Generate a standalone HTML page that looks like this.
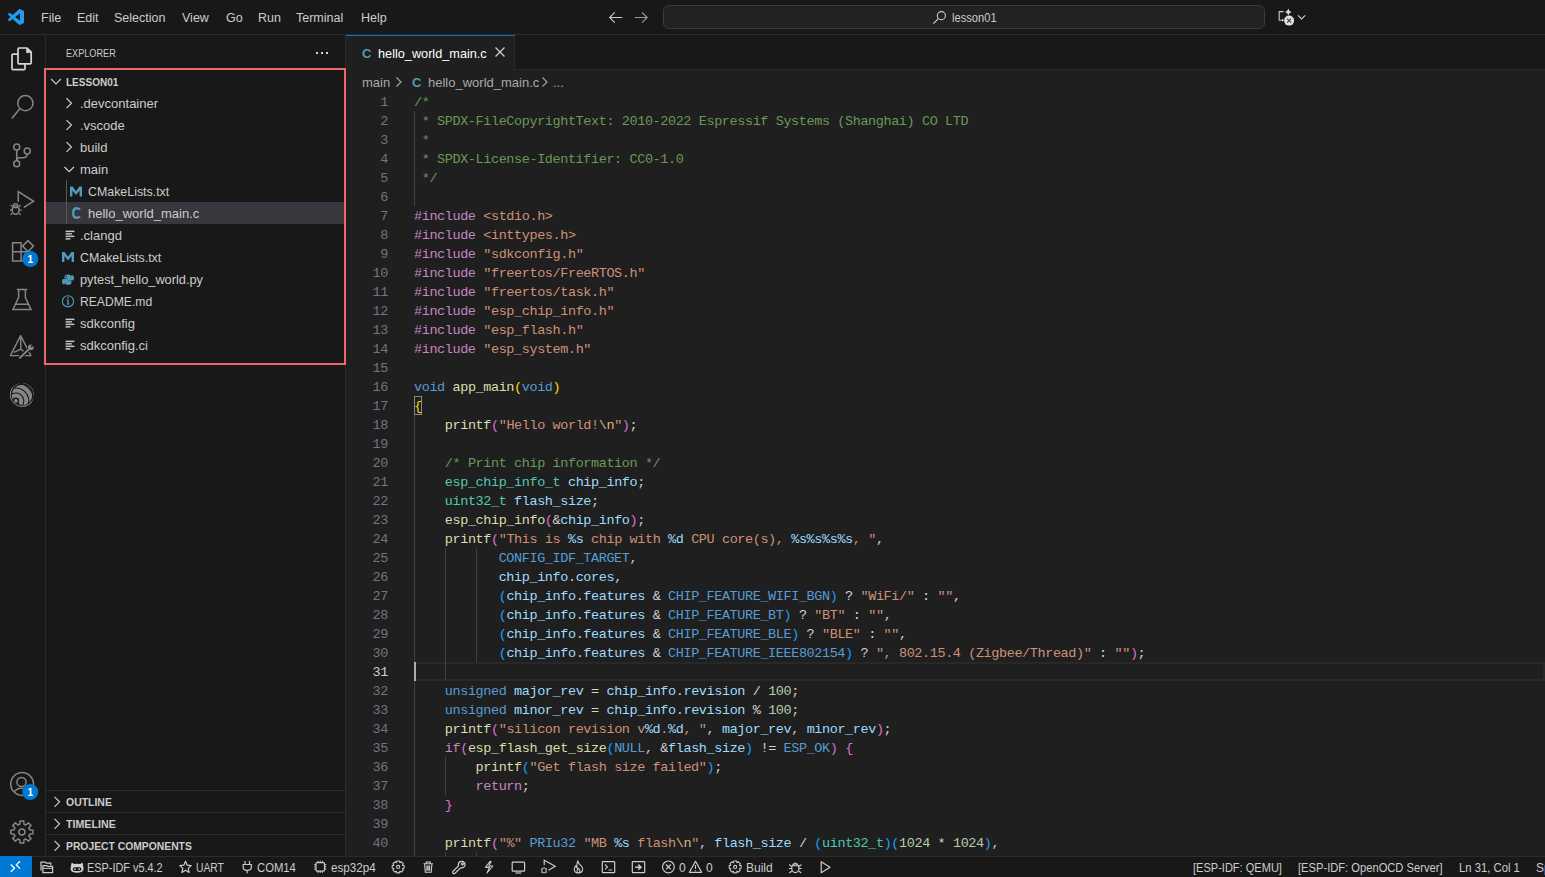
<!DOCTYPE html>
<html><head><meta charset="utf-8">
<style>
*{margin:0;padding:0;box-sizing:border-box}
html,body{width:1545px;height:877px;overflow:hidden;background:#181818;font-family:"Liberation Sans",sans-serif;color:#cccccc}
svg{position:absolute;overflow:visible}
.t{position:absolute;white-space:nowrap}
#title{position:absolute;left:0;top:0;width:1545px;height:35px;background:#181818;border-bottom:1px solid #2b2b2b}
.menu{position:absolute;top:11px;font-size:12.5px;color:#cccccc;white-space:nowrap}
#act{position:absolute;left:0;top:35px;width:46px;height:821px;background:#181818;border-right:1px solid #2b2b2b}
#side{position:absolute;left:46px;top:35px;width:300px;height:821px;background:#181818;border-right:1px solid #2b2b2b}
#editor{position:absolute;left:346px;top:35px;width:1199px;height:821px;background:#1f1f1f}
#tabs{position:absolute;left:0;top:0;width:1199px;height:35px;background:#181818;border-bottom:1px solid #2b2b2b}
#status{position:absolute;left:0;top:856px;width:1545px;height:21px;background:#181818;border-top:1px solid #2b2b2b;font-size:12px;color:#cccccc}
.row{position:absolute;left:0;height:22px;width:298px;font-size:13px;line-height:22px;white-space:nowrap}
.ph{position:absolute;left:0;width:299px;height:22px;border-top:1px solid #2b2b2b;font-size:11px;font-weight:bold;line-height:21px}
.code{position:absolute;left:68px;top:58px;font-family:"Liberation Mono",monospace;font-size:13.5px;letter-spacing:-0.405px;line-height:19px;white-space:pre;color:#cccccc}
.ln{position:absolute;left:0;top:58px;width:42px;text-align:right;font-family:"Liberation Mono",monospace;font-size:13.5px;letter-spacing:-0.405px;line-height:19px;color:#6e7681;white-space:pre}
.c{color:#6a9955}.p{color:#c586c0}.s{color:#ce9178}.k{color:#569cd6}.f{color:#dcdcaa}.v{color:#9cdcfe}.ty{color:#4ec9b0}.n{color:#b5cea8}.m{color:#569cd6}.e{color:#d7ba7d}.b1{color:#ffd700}.b2{color:#da70d6}.b3{color:#179fff}.o{color:#d4d4d4}
.si{position:absolute;top:1px;transform-origin:0 0;height:20px;line-height:20px;font-size:12px;color:#cccccc;white-space:nowrap}
.guide{position:absolute;width:1px;background:#404040}
</style></head><body>
<!-- TITLE BAR -->
<div id="title">
  <svg style="left:8px;top:9px" width="16" height="16" viewBox="0 0 100 100"><path d="M96.46 10.8 L75.86 0.9 C73.48 -0.25 70.63 0.23 68.76 2.1 L29.34 38.07 L12.17 25.04 C10.57 23.83 8.33 23.93 6.85 25.28 L1.34 30.29 C-0.48 31.94 -0.48 34.8 1.33 36.45 L16.22 50 L1.33 63.55 C-0.48 65.2 -0.48 68.06 1.34 69.71 L6.85 74.72 C8.33 76.07 10.57 76.17 12.17 74.96 L29.34 61.93 L68.76 97.9 C70.63 99.77 73.48 100.25 75.86 99.1 L96.46 89.2 C98.62 88.16 100 85.97 100 83.57 V16.43 C100 14.03 98.62 11.84 96.46 10.8 Z M75.02 72.7 L45.11 50 L75.02 27.3 V72.7 Z" fill="#1f9cf0"/></svg>
  <div class="menu" style="left:41px">File</div>
  <div class="menu" style="left:77px">Edit</div>
  <div class="menu" style="left:114px">Selection</div>
  <div class="menu" style="left:182px">View</div>
  <div class="menu" style="left:226px">Go</div>
  <div class="menu" style="left:258px">Run</div>
  <div class="menu" style="left:296px">Terminal</div>
  <div class="menu" style="left:361px">Help</div>
  <svg style="left:600px;top:0" width="56" height="34" viewBox="600 0 56 34">
    <path d="M622.2 17.5 H609.5 M614.8 12.3 L609.6 17.5 L614.8 22.7" stroke="#cccccc" stroke-width="1.1" fill="none"/>
    <path d="M635 17.5 H647.3 M642 12.3 L647.2 17.5 L642 22.7" stroke="#9a9a9a" stroke-width="1.1" fill="none"/>
  </svg>
  <div style="position:absolute;left:663px;top:5px;width:602px;height:24px;border:1px solid #3c3c3c;border-radius:6px;background:#222222"></div>
  <svg style="left:932px;top:9.5px" width="15" height="15" viewBox="0 0 16 16"><circle cx="10" cy="6" r="4.3" stroke="#cccccc" stroke-width="1.2" fill="none"/><path d="M7 9 L1.5 14.5" stroke="#cccccc" stroke-width="1.3"/></svg>
  <div class="t" style="left:952px;top:11px;font-size:12px;color:#cccccc;transform:scaleX(0.93);transform-origin:0 0">lesson01</div>
  <svg style="left:1270px;top:0" width="40" height="34" viewBox="1270 0 40 34">
    <path d="M1283.6 11.6 H1279.2 V20.2 H1282.4" stroke="#cccccc" stroke-width="1.1" fill="none"/>
    <path d="M1282 21.8 L1284 20.2 L1282 18.6 Z" fill="#cccccc"/>
    <path d="M1288.3 8.6 Q1288.8 11.4 1291.6 12 Q1288.8 12.6 1288.3 15.4 Q1287.8 12.6 1285 12 Q1287.8 11.4 1288.3 8.6 Z" fill="#dddddd"/>
    <circle cx="1289.1" cy="20.6" r="5" fill="#e0e0e0"/>
    <path d="M1287.1 18.6 L1291.1 22.6 M1291.1 18.6 L1287.1 22.6" stroke="#3a3a3a" stroke-width="1.1"/>
    <path d="M1298 15.3 L1301.6 18.9 L1305.2 15.3" stroke="#cccccc" stroke-width="1.1" fill="none"/>
  </svg>
</div>
<!-- ACTIVITY BAR -->
<div id="act">
  <!-- explorer (abs coords: act top=35, so y-35) -->
  <svg style="left:0;top:0" width="46" height="821" viewBox="0 35 46 821">
    <g fill="none" stroke="#d7d7d7" stroke-width="1.7" stroke-linejoin="round">
      <path d="M18 54.2 H13.2 Q12 54.2 12 55.4 V68.5 Q12 69.7 13.2 69.7 H23.8 Q25 69.7 25 68.5 V64"/>
      <path d="M19.2 48 H27 L31.2 52.2 V62.7 Q31.2 63.9 30 63.9 H19.2 Q18 63.9 18 62.7 V49.2 Q18 48 19.2 48 Z"/>
    </g>
    <path d="M26.6 48.5 V52.6 H30.7 Z" fill="#d7d7d7" stroke="#d7d7d7" stroke-width="0.8" stroke-linejoin="round"/>
    <g fill="none" stroke="#868686" stroke-width="1.5">
      <!-- search -->
      <circle cx="25.4" cy="103.2" r="7.6"/>
      <path d="M20 108.6 L11.8 118.6"/>
      <!-- source control -->
      <circle cx="16.7" cy="146.9" r="3"/>
      <circle cx="16.7" cy="163.7" r="3"/>
      <circle cx="27.2" cy="151.1" r="3"/>
      <path d="M16.7 149.9 V160.7"/>
      <path d="M27.2 154.1 Q27.2 157.8 23 157.8 H19.5 Q16.7 157.8 16.7 160.7"/>
      <!-- run & debug -->
      <path d="M18.3 201.8 V191.6 L33.6 201.3 L23.8 207.4"/>
      <ellipse cx="15.6" cy="210" rx="3.4" ry="4.3"/>
      <path d="M13.2 206 Q13.4 203.6 15.6 203.6 Q17.8 203.6 18 206 M12.2 207.6 H19 M12.3 206.6 L10.6 205.2 M12.2 210 H10 M12.4 213.3 L10.5 214.8 M18.9 206.6 L20.6 205.2 M19 210 H21.4 M18.8 213.3 L20.7 214.8" stroke-width="1.3"/>
      <!-- extensions -->
      <path d="M12.6 242.7 H21.1 V261 H12.6 Z M12.6 251.8 H30 V261 H21.1"/>
      <path d="M28 240.6 L33.5 246.1 L28 251.6 L22.5 246.1 Z"/>
      <!-- testing beaker -->
      <path d="M16.8 289.6 H27.2 M18.6 289.6 V297.5 L13 309.5 H31 L25.4 297.5 V289.6 M15.2 304.2 H28.8"/>
      <!-- esp-idf pyramid -->
      <path d="M20.6 335.6 L10.4 355.6 H30.9 Z M20.6 336 L20.9 349.2 M13.8 352.4 L20.9 349.2 L26.8 353.8" stroke-width="1.4" stroke-linejoin="round"/>
      <!-- accounts -->
      <circle cx="22.1" cy="784" r="11.4"/>
      <circle cx="21.5" cy="782" r="4.6"/>
      <path d="M14 792.2 Q16.5 788.2 21.5 788.2 Q24.5 788.2 26.5 789.5"/>
      <!-- gear -->
      <path d="M20.06 820.95 L23.74 820.95 L24.07 824.30 L25.81 825.02 L28.41 822.89 L31.01 825.49 L28.88 828.09 L29.60 829.83 L32.95 830.16 L32.95 833.84 L29.60 834.17 L28.88 835.91 L31.01 838.51 L28.41 841.11 L25.81 838.98 L24.07 839.70 L23.74 843.05 L20.06 843.05 L19.73 839.70 L17.99 838.98 L15.39 841.11 L12.79 838.51 L14.92 835.91 L14.20 834.17 L10.85 833.84 L10.85 830.16 L14.20 829.83 L14.92 828.09 L12.79 825.49 L15.39 822.89 L17.99 825.02 L19.73 824.30 Z" stroke-linejoin="round"/>
      <circle cx="21.9" cy="832" r="3"/>
    </g>
    <!-- wrench on pyramid -->
    <path d="M20 357.8 L28.6 349.4" stroke="#181818" stroke-width="4.2" stroke-linecap="round"/>
    <circle cx="30.8" cy="347.3" r="3.9" fill="#181818"/>
    <path d="M20 357.8 L28.6 349.4" stroke="#868686" stroke-width="1.9" stroke-linecap="round"/>
    <circle cx="30.8" cy="347.3" r="2.9" fill="#868686"/>
    <path d="M31.2 346.9 L34.5 343.6" stroke="#181818" stroke-width="1.8"/>
    <!-- espressif logo -->
    <clipPath id="espc"><circle cx="22" cy="394.9" r="12.1"/></clipPath>
    <g clip-path="url(#espc)">
      <circle cx="22" cy="394.9" r="12.1" fill="#868686"/>
      <g fill="none" stroke="#181818" stroke-width="1.1">
        <circle cx="15.9" cy="400.9" r="7.9"/>
        <circle cx="15.9" cy="400.9" r="12.9"/>
        <circle cx="15.9" cy="400.9" r="18"/>
      </g>
      <path d="M15.90 400.90 L38.88 420.18 L33.11 425.47 L26.16 429.09 L18.51 430.79 L10.69 430.44 L3.22 428.09 L-3.38 423.88 L-8.67 418.11 L-12.29 411.16 L-13.99 403.51 L-13.64 395.69 L-13.08 393.14 Z" fill="#181818"/>
      <circle cx="15.9" cy="400.9" r="3.3" fill="#181818"/>
      <circle cx="22" cy="394.9" r="10.9" fill="none" stroke="#181818" stroke-width="1.3" stroke-dasharray="0"/>
    </g>
    <path d="M12.5 387.5 A 11.6 11.6 0 0 0 32 401.5" fill="none" stroke="#868686" stroke-width="1"/>
    <circle cx="15.9" cy="400.9" r="1.9" fill="#868686"/>
    <!-- badges -->
    <circle cx="30.3" cy="259" r="8" fill="#0078d4"/>
    <text x="30.3" y="262.6" font-family="Liberation Sans" font-size="10" font-weight="bold" fill="#ffffff" text-anchor="middle">1</text>
    <circle cx="30.2" cy="792" r="8" fill="#0078d4"/>
    <text x="30.2" y="795.6" font-family="Liberation Sans" font-size="10" font-weight="bold" fill="#ffffff" text-anchor="middle">1</text>
  </svg>
</div>
<!-- SIDEBAR -->
<div id="side">
  <div class="t" style="left:20px;top:12px;font-size:11px;color:#cccccc;transform:scaleX(0.83);transform-origin:0 0">EXPLORER</div>
  <svg style="left:0;top:0" width="300" height="821" viewBox="46 35 300 821">
    <g fill="#d4d4d4"><rect x="316" y="52" width="2" height="2"/><rect x="321" y="52" width="2" height="2"/><rect x="326" y="52" width="2" height="2"/></g>
    <!-- selected row -->
    <rect x="46" y="202" width="299" height="22" fill="#37373d"/>
    <!-- tree guide for main children -->
    <rect x="66" y="180" width="1" height="44" fill="#585858"/>
    <g fill="none" stroke="#cccccc" stroke-width="1.2">
      <path d="M51.2 79 L56 83.8 L60.8 79"/>
      <path d="M66.5 98.3 L71.5 103.2 L66.5 108.1"/>
      <path d="M66.5 120.1 L71.5 125 L66.5 129.9"/>
      <path d="M66.5 142.1 L71.5 147 L66.5 151.9"/>
      <path d="M64.5 167 L69.2 171.7 L73.9 167"/>
      <!-- bottom panes chevrons -->
      <path d="M54.5 796.8 L59.5 801.8 L54.5 806.8"/>
      <path d="M54.5 818.8 L59.5 823.8 L54.5 828.8"/>
      <path d="M54.5 840.8 L59.5 845.8 L54.5 850.8"/>
    </g>
    <!-- lines icons -->
    <g fill="#c5c5c5">
      <rect x="65.6" y="230.6" width="8.8" height="1.5"/><rect x="65.6" y="233.1" width="6.2" height="1.5"/><rect x="65.6" y="235.6" width="8.8" height="1.5"/><rect x="65.6" y="238.1" width="4.8" height="1.5"/>
      <rect x="65.6" y="318.6" width="8.8" height="1.5"/><rect x="65.6" y="321.1" width="6.2" height="1.5"/><rect x="65.6" y="323.6" width="8.8" height="1.5"/><rect x="65.6" y="326.1" width="4.8" height="1.5"/>
      <rect x="65.6" y="340.6" width="8.8" height="1.5"/><rect x="65.6" y="343.1" width="6.2" height="1.5"/><rect x="65.6" y="345.6" width="8.8" height="1.5"/><rect x="65.6" y="348.1" width="4.8" height="1.5"/>
    </g>
    <!-- M icons -->
    <path d="M70 196.5 V186.5 H72.6 L76 191.3 L79.4 186.5 H82 V196.5 H79.6 V190.5 L76 195 L72.4 190.5 V196.5 Z" fill="#519aba"/>
    <path d="M62 262 V252 H64.6 L68 256.8 L71.4 252 H74 V262 H71.6 V256 L68 260.5 L64.4 256 V262 Z" fill="#519aba"/>
    <!-- C icon -->
    <path d="M80 209.5 Q78.8 208.3 76.5 208.3 Q73.2 208.3 73.2 213 Q73.2 217.7 76.5 217.7 Q78.8 217.7 80 216.5" fill="none" stroke="#519aba" stroke-width="2.4"/>
    <!-- python -->
    <g fill="#519aba">
      <path d="M67.8 274.6 Q64.6 274.6 64.6 276.6 V278.4 H68.2 V279 H63.6 Q62 279 62 281 Q62 284.2 63.6 284.2 H64.8 V282.4 Q64.8 280.6 66.6 280.6 H69.4 Q71 280.6 71 279 V276.6 Q71 274.6 67.8 274.6 Z"/>
      <path d="M68.2 290 Q71.4 290 71.4 288 V286.2 H67.8 V285.6 H72.4 Q74 285.6 74 283.6 Q74 280.4 72.4 280.4 H71.2 V282.2 Q71.2 284 69.4 284 H66.6 Q65 284 65 285.6 V288 Q65 290 68.2 290 Z" transform="translate(0,-5.2)"/>
    </g>
    <circle cx="66.3" cy="276.4" r="0.7" fill="#181818"/>
    <!-- info -->
    <circle cx="68" cy="301.3" r="5.6" fill="none" stroke="#519aba" stroke-width="1.1"/>
    <rect x="67.4" y="299.8" width="1.3" height="4.6" fill="#519aba"/><rect x="66.6" y="299.8" width="2" height="1" fill="#519aba"/><rect x="66.6" y="303.6" width="2.9" height="0.9" fill="#519aba"/>
    <circle cx="68" cy="297.9" r="0.8" fill="#519aba"/>
    <!-- red highlight box -->
    <rect x="45" y="69" width="300" height="295" fill="none" stroke="#ee6868" stroke-width="2"/>
  </svg>
  <div class="row" style="top:36px;left:20px;font-size:11px;font-weight:bold;transform:scaleX(0.91);transform-origin:0 0">LESSON01</div>
  <div class="row" style="top:58px;left:34px">.devcontainer</div>
  <div class="row" style="top:80px;left:34px">.vscode</div>
  <div class="row" style="top:102px;left:34px">build</div>
  <div class="row" style="top:124px;left:34px">main</div>
  <div class="row" style="top:146px;left:42px;transform:scaleX(0.953);transform-origin:0 0">CMakeLists.txt</div>
  <div class="row" style="top:168px;left:42px">hello_world_main.c</div>
  <div class="row" style="top:190px;left:34px">.clangd</div>
  <div class="row" style="top:212px;left:34px;transform:scaleX(0.953);transform-origin:0 0">CMakeLists.txt</div>
  <div class="row" style="top:234px;left:34px;transform:scaleX(0.984);transform-origin:0 0">pytest_hello_world.py</div>
  <div class="row" style="top:256px;left:34px;transform:scaleX(0.934);transform-origin:0 0">README.md</div>
  <div class="row" style="top:278px;left:34px">sdkconfig</div>
  <div class="row" style="top:300px;left:34px">sdkconfig.ci</div>
  <div class="ph" style="top:755px"><span style="position:absolute;left:20px;top:1px;transform:scaleX(0.95);transform-origin:0 0">OUTLINE</span></div>
  <div class="ph" style="top:777px"><span style="position:absolute;left:20px;top:1px;transform:scaleX(0.97);transform-origin:0 0">TIMELINE</span></div>
  <div class="ph" style="top:799px"><span style="position:absolute;left:20px;top:1px;transform:scaleX(0.94);transform-origin:0 0">PROJECT COMPONENTS</span></div>
</div>
<!-- EDITOR -->
<div id="editor">
  <div id="tabs"></div>
  <div style="position:absolute;left:0;top:0;width:169px;height:35px;background:#1f1f1f;border-top:1px solid #0078d4;border-right:1px solid #2b2b2b"></div>
  <div class="t" style="left:16px;top:11px;font-size:13px;font-weight:bold;color:#519aba">C</div>
  <div class="t" style="left:32px;top:11px;font-size:13px;color:#ffffff;transform:scaleX(0.977);transform-origin:0 0">hello_world_main.c</div>
  <svg style="left:149px;top:12px" width="10" height="10" viewBox="0 0 10 10"><path d="M0.5 0.5 L9.5 9.5 M9.5 0.5 L0.5 9.5" stroke="#cccccc" stroke-width="1.3"/></svg>
  <!-- breadcrumbs -->
  <div class="t" style="left:16px;top:40px;font-size:13px;color:#a9a9a9">main</div>
  <svg style="left:50px;top:42px" width="6" height="10" viewBox="0 0 6 10"><path d="M0.5 0.5 L5 5 L0.5 9.5" stroke="#a9a9a9" stroke-width="1.1" fill="none"/></svg>
  <div class="t" style="left:66px;top:40px;font-size:13px;font-weight:bold;color:#519aba">C</div>
  <div class="t" style="left:82px;top:40px;font-size:13px;color:#a9a9a9">hello_world_main.c</div>
  <svg style="left:196px;top:42px" width="6" height="10" viewBox="0 0 6 10"><path d="M0.5 0.5 L5 5 L0.5 9.5" stroke="#a9a9a9" stroke-width="1.1" fill="none"/></svg>
  <div class="t" style="left:207px;top:40px;font-size:13px;color:#a9a9a9">...</div>
  <!-- current line -->
  <div style="position:absolute;left:68px;top:627px;width:1131px;height:19px;border:2px solid #282828"></div>
  <!-- indent guides (x rel editor: col0=68, col4=99, col8=130) -->
  <div class="guide" style="left:68px;top:76px;height:95px"></div>
  <div class="guide" style="left:68px;top:380px;height:441px"></div>
  <div class="guide" style="left:99px;top:513px;height:133px"></div>
  <div class="guide" style="left:130px;top:513px;height:114px"></div>
  <div class="guide" style="left:99px;top:722px;height:38px"></div>
  <div class="guide" style="left:99px;top:817px;height:4px"></div>
  <div class="guide" style="left:130px;top:817px;height:4px"></div>
  <!-- bracket match box on line 17 -->
  <div style="position:absolute;left:68px;top:361px;width:8px;height:19px;border:1px solid #888888"></div>
  <div class="ln">1
2
3
4
5
6
7
8
9
10
11
12
13
14
15
16
17
18
19
20
21
22
23
24
25
26
27
28
29
30
<span style="color:#cccccc">31</span>
32
33
34
35
36
37
38
39
40</div>
  <div class="code"><span class="c">/*</span>
<span class="c"> * SPDX-FileCopyrightText: 2010-2022 Espressif Systems (Shanghai) CO LTD</span>
<span class="c"> *</span>
<span class="c"> * SPDX-License-Identifier: CC0-1.0</span>
<span class="c"> */</span>

<span class="p">#include</span> <span class="s">&lt;stdio.h&gt;</span>
<span class="p">#include</span> <span class="s">&lt;inttypes.h&gt;</span>
<span class="p">#include</span> <span class="s">&quot;sdkconfig.h&quot;</span>
<span class="p">#include</span> <span class="s">&quot;freertos/FreeRTOS.h&quot;</span>
<span class="p">#include</span> <span class="s">&quot;freertos/task.h&quot;</span>
<span class="p">#include</span> <span class="s">&quot;esp_chip_info.h&quot;</span>
<span class="p">#include</span> <span class="s">&quot;esp_flash.h&quot;</span>
<span class="p">#include</span> <span class="s">&quot;esp_system.h&quot;</span>

<span class="k">void</span> <span class="f">app_main</span><span class="b1">(</span><span class="k">void</span><span class="b1">)</span>
<span class="b1">{</span>
    <span class="f">printf</span><span class="b2">(</span><span class="s">&quot;Hello world!</span><span class="e">\n</span><span class="s">&quot;</span><span class="b2">)</span>;

    <span class="c">/* Print chip information */</span>
    <span class="ty">esp_chip_info_t</span> <span class="v">chip_info</span>;
    <span class="ty">uint32_t</span> <span class="v">flash_size</span>;
    <span class="f">esp_chip_info</span><span class="b2">(</span><span class="o">&amp;</span><span class="v">chip_info</span><span class="b2">)</span>;
    <span class="f">printf</span><span class="b2">(</span><span class="s">&quot;This is </span><span class="v">%s</span><span class="s"> chip with </span><span class="v">%d</span><span class="s"> CPU core(s), </span><span class="v">%s%s%s%s</span><span class="s">, &quot;</span>,
           <span class="m">CONFIG_IDF_TARGET</span>,
           <span class="v">chip_info</span>.<span class="v">cores</span>,
           <span class="b3">(</span><span class="v">chip_info</span>.<span class="v">features</span> <span class="o">&amp;</span> <span class="m">CHIP_FEATURE_WIFI_BGN</span><span class="b3">)</span> <span class="o">?</span> <span class="s">&quot;WiFi/&quot;</span> <span class="o">:</span> <span class="s">&quot;&quot;</span>,
           <span class="b3">(</span><span class="v">chip_info</span>.<span class="v">features</span> <span class="o">&amp;</span> <span class="m">CHIP_FEATURE_BT</span><span class="b3">)</span> <span class="o">?</span> <span class="s">&quot;BT&quot;</span> <span class="o">:</span> <span class="s">&quot;&quot;</span>,
           <span class="b3">(</span><span class="v">chip_info</span>.<span class="v">features</span> <span class="o">&amp;</span> <span class="m">CHIP_FEATURE_BLE</span><span class="b3">)</span> <span class="o">?</span> <span class="s">&quot;BLE&quot;</span> <span class="o">:</span> <span class="s">&quot;&quot;</span>,
           <span class="b3">(</span><span class="v">chip_info</span>.<span class="v">features</span> <span class="o">&amp;</span> <span class="m">CHIP_FEATURE_IEEE802154</span><span class="b3">)</span> <span class="o">?</span> <span class="s">&quot;, 802.15.4 (Zigbee/Thread)&quot;</span> <span class="o">:</span> <span class="s">&quot;&quot;</span><span class="b2">)</span>;

    <span class="k">unsigned</span> <span class="v">major_rev</span> <span class="o">=</span> <span class="v">chip_info</span>.<span class="v">revision</span> <span class="o">/</span> <span class="n">100</span>;
    <span class="k">unsigned</span> <span class="v">minor_rev</span> <span class="o">=</span> <span class="v">chip_info</span>.<span class="v">revision</span> <span class="o">%</span> <span class="n">100</span>;
    <span class="f">printf</span><span class="b2">(</span><span class="s">&quot;silicon revision v</span><span class="v">%d</span><span class="s">.</span><span class="v">%d</span><span class="s">, &quot;</span>, <span class="v">major_rev</span>, <span class="v">minor_rev</span><span class="b2">)</span>;
    <span class="p">if</span><span class="b2">(</span><span class="f">esp_flash_get_size</span><span class="b3">(</span><span class="m">NULL</span>, <span class="o">&amp;</span><span class="v">flash_size</span><span class="b3">)</span> <span class="o">!=</span> <span class="m">ESP_OK</span><span class="b2">)</span> <span class="b2">{</span>
        <span class="f">printf</span><span class="b3">(</span><span class="s">&quot;Get flash size failed&quot;</span><span class="b3">)</span>;
        <span class="p">return</span>;
    <span class="b2">}</span>

    <span class="f">printf</span><span class="b2">(</span><span class="s">&quot;%&quot;</span> <span class="m">PRIu32</span> <span class="s">&quot;MB </span><span class="v">%s</span><span class="s"> flash</span><span class="e">\n</span><span class="s">&quot;</span>, <span class="v">flash_size</span> <span class="o">/</span> <span class="b3">(</span><span class="ty">uint32_t</span><span class="b3">)</span><span class="b3">(</span><span class="n">1024</span> <span class="o">*</span> <span class="n">1024</span><span class="b3">)</span>,</div>
  <!-- cursor -->
  <div style="position:absolute;left:68px;top:627px;width:2px;height:19px;background:#aeafad"></div>
</div>
<!-- STATUS BAR -->
<div id="status">
  <div style="position:absolute;left:0;top:-1px;width:32px;height:21px;background:#0078d4"></div>
  <svg style="left:0;top:-1px" width="1545" height="21" viewBox="0 856 1545 21">
    <g fill="none" stroke="#ffffff" stroke-width="1.3">
      <path d="M10.8 864.5 L14.5 868.2 L10.8 871.9 M20 861.2 L16.3 864.9 L20 868.6"/>
    </g>
    <g fill="none" stroke="#cccccc" stroke-width="1.2">
      <!-- folder/window icon -->
      <path d="M41 870.5 V862.2 H45.2 L46.2 863.2 H50.8 V865.3"/>
      <path d="M42.9 872.6 V865.6 H46.8 L47.8 866.4 H52.6 V872.6 Z"/>
      <path d="M43 868.3 H52.5" stroke-width="1"/>
      <!-- star -->
      <path d="M185.5 861.3 L187.2 865.2 L191.2 865.6 L188.2 868.4 L189.1 872.5 L185.5 870.3 L181.9 872.5 L182.8 868.4 L179.8 865.6 L183.8 865.2 Z" stroke-linejoin="round"/>
      <!-- plug -->
      <path d="M245 861 V864.5 M249.5 861 V864.5 M243.2 864.5 H251.3 V867.5 Q251.3 870.3 247.2 870.3 Q243.2 870.3 243.2 867.5 Z M247.2 870.3 V873.3"/>
      <!-- chip -->
      <rect x="316" y="862.6" width="8.5" height="8.5" rx="1"/>
      <path d="M318 860.8 V862.6 M320.2 860.8 V862.6 M322.4 860.8 V862.6 M318 871.1 V872.9 M320.2 871.1 V872.9 M322.4 871.1 V872.9 M314.2 864.6 H316 M314.2 866.8 H316 M314.2 869 H316 M324.5 864.6 H326.3 M324.5 866.8 H326.3 M324.5 869 H326.3" stroke-width="1"/>
      <!-- trash -->
      <path d="M423.5 863.8 H433 M426.2 863.8 V862 H430.3 V863.8 M424.6 864 L425.3 872.3 H431.2 L431.9 864 M426.9 865.5 V870.8 M428.2 865.5 V870.8 M429.6 865.5 V870.8" stroke-width="1.1"/>
      <!-- wrench -->
      <path d="M452.8 871.5 L458.5 865.8 Q457.8 862.8 460.2 861.6 Q462 860.9 463.6 861.6 L461.3 863.9 L462.4 865 L464.7 862.7 Q465.4 864.3 464.7 866.1 Q463.5 868.5 460.5 867.8 L454.8 873.5 Q453.8 874 453 873.3 Q452.3 872.5 452.8 871.5 Z" stroke-linejoin="round"/>
      <!-- flash -->
      <path d="M490.3 861 L485.5 867.4 H489.5 L487 873 L492.8 866 H488.8 L491.3 861" stroke-linejoin="round" stroke-width="1.1"/>
      <!-- monitor -->
      <rect x="512.2" y="862.2" width="12.4" height="9" rx="0.8"/>
      <path d="M515.5 873 H521.3"/>
      <!-- debug run -->
      <path d="M544.2 865 V860.2 L555.2 866.2 L548.5 870.2"/>
      <ellipse cx="544" cy="870.4" rx="2.2" ry="2.6" stroke-width="1"/>
      <path d="M541.2 868.6 L542.1 869.2 M541 870.7 H541.8 M541.2 872.8 L542.1 872.2 M546.8 868.6 L545.9 869.2 M546.9 870.7 H546.1 M546.8 872.8 L545.9 872.2" stroke-width="0.9"/>
      <!-- flame -->
      <path d="M577.8 860.8 Q578.3 863.3 580.5 865.2 Q583.2 867.6 582.6 870.2 Q581.8 873 578.5 873 Q575 873 574.3 870.3 Q573.8 867.8 575.8 865.6 Q576 867.5 577 868 Q576.3 864 577.8 860.8 Z M578.4 873 Q576.7 872.5 577 870.6 Q577.3 869.3 578.6 868.2 Q579 869.6 579.9 870.4 Q580.4 872.3 578.4 873" stroke-linejoin="round" stroke-width="1.05"/>
      <!-- terminal -->
      <rect x="602.3" y="861.7" width="12.4" height="11" rx="0.8"/>
      <path d="M605 864.5 L607.5 866.9 L605 869.3 M608.5 870 H612" stroke-width="1.1"/>
      <!-- arrow box -->
      <rect x="632.3" y="861.7" width="12.4" height="11" rx="0.8"/>
      <path d="M635.2 867.2 H640.5 M638.3 864.6 L641 867.2 L638.3 869.8" stroke-width="1.5"/>
      <!-- error -->
      <circle cx="668.4" cy="866.9" r="5.9"/>
      <path d="M666 864.5 L670.8 869.3 M670.8 864.5 L666 869.3"/>
      <!-- warning -->
      <path d="M695.5 861.3 L701.6 872.3 H689.4 Z" stroke-linejoin="round"/>
      <path d="M695.5 865 V869 M695.5 870.2 V871.2" stroke-width="1.1"/>
      <!-- bug -->
      <ellipse cx="795.3" cy="868.3" rx="3.6" ry="4.3"/>
      <path d="M792.8 864.5 Q795.3 861.5 797.8 864.5 M791.6 866.5 L789.2 864.5 M791.6 868.5 H789 M791.8 871 L789.4 873 M799 866.5 L801.4 864.5 M799 868.5 H801.6 M798.8 871 L801.2 873 M792 865.8 H798.6" stroke-width="1.1"/>
      <!-- play -->
      <path d="M821.2 861.8 L830 867.3 L821.2 872.8 Z" stroke-linejoin="round"/>
    </g>
    <!-- gears (status) -->
    <g fill="none" stroke="#cccccc" stroke-width="1.1">
      <path id="sg" d="M396.8 861 H399.5 L399.9 862.7 L401.4 861.8 L403.3 863.7 L402.4 865.2 L404.1 865.6 V868.3 L402.4 868.7 L403.3 870.2 L401.4 872.1 L399.9 871.2 L399.5 872.9 H396.8 L396.4 871.2 L394.9 872.1 L393 870.2 L393.9 868.7 L392.2 868.3 V865.6 L393.9 865.2 L393 863.7 L394.9 861.8 L396.4 862.7 Z" stroke-linejoin="round"/>
      <circle cx="398.15" cy="866.95" r="1.6"/>
      <path d="M733.8 861 H736.5 L736.9 862.7 L738.4 861.8 L740.3 863.7 L739.4 865.2 L741.1 865.6 V868.3 L739.4 868.7 L740.3 870.2 L738.4 872.1 L736.9 871.2 L736.5 872.9 H733.8 L733.4 871.2 L731.9 872.1 L730 870.2 L730.9 868.7 L729.2 868.3 V865.6 L730.9 865.2 L730 863.7 L731.9 861.8 L733.4 862.7 Z" stroke-linejoin="round"/>
      <circle cx="735.15" cy="866.95" r="1.6"/>
    </g>
    <!-- cat icon -->
    <path d="M71.8 862.4 L74 864.1 Q77.1 863.4 80.2 864.1 L82.4 862.4 Q83.4 865 83.2 866.8 Q84 868.2 83.4 870 Q82.3 872.8 77.1 872.8 Q71.9 872.8 70.8 870 Q70.2 868.2 71 866.8 Q70.8 865 71.8 862.4 Z" fill="#d0d0d0"/>
    <rect x="72.8" y="867.3" width="8.6" height="3.7" rx="1.8" fill="#181818"/>
    <g fill="#d0d0d0"><circle cx="75" cy="869.1" r="0.9"/><circle cx="79.2" cy="869.1" r="0.9"/></g>
  </svg>
  <div class="si" style="left:87px;transform:scaleX(0.907)">ESP-IDF v5.4.2</div>
  <div class="si" style="left:196px;transform:scaleX(0.86)">UART</div>
  <div class="si" style="left:257px;transform:scaleX(0.94)">COM14</div>
  <div class="si" style="left:331px;transform:scaleX(0.97)">esp32p4</div>
  <div class="si" style="left:679px">0</div>
  <div class="si" style="left:706px">0</div>
  <div class="si" style="left:746px">Build</div>
  <div class="si" style="left:1193px;transform:scaleX(0.92)">[ESP-IDF: QEMU]</div>
  <div class="si" style="left:1298px;transform:scaleX(0.93)">[ESP-IDF: OpenOCD Server]</div>
  <div class="si" style="left:1459px;transform:scaleX(0.94)">Ln 31, Col 1</div>
  <div class="si" style="left:1536px">Spaces: 4</div>
</div>
</body></html>
